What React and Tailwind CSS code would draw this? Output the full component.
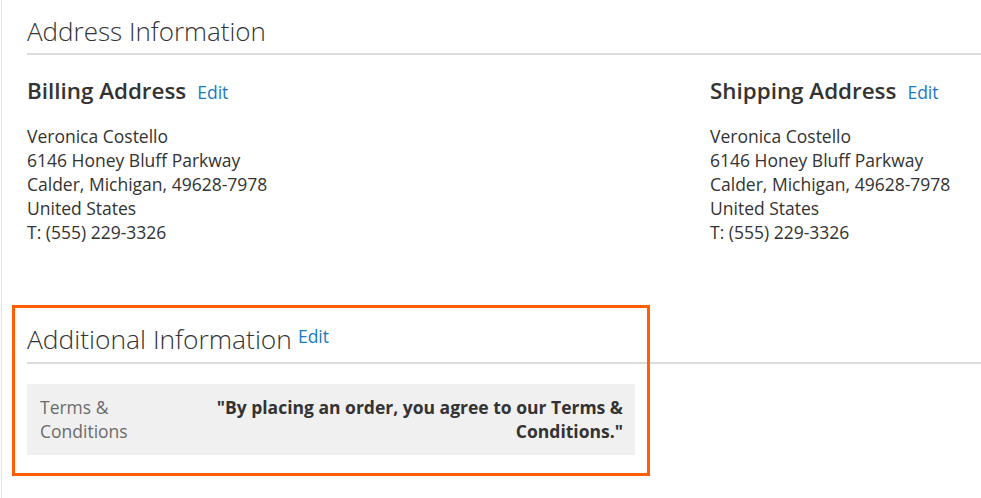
export default function App() {
  const font = { fontFamily: '"Open Sans", "Noto Sans", sans-serif' };
  const Address = () => (
    <div className="text-[17.5px] leading-[24px] text-[#333]">
      <div>Veronica Costello</div>
      <div>6146 Honey Bluff Parkway</div>
      <div>Calder, Michigan, 49628-7978</div>
      <div>United States</div>
      <div>T: (555) 229-3326</div>
    </div>
  );
  return (
    <div className="relative w-[981px] h-[498px] overflow-hidden bg-white" style={font}>
      <div className="ml-px h-full border-l border-[#e3e3e3] pl-[25px]">
        <div className="pt-[16px] pb-[6px] border-b-2 border-[#dcdcdc]">
          <h2 className="text-[26px] leading-[31px] font-light text-[#333]">Address Information</h2>
        </div>
        <div className="grid grid-cols-[683px_1fr] pt-[22px]">
          <div>
            <div className="flex items-baseline h-[28px]">
              <span className="text-[22.4px] leading-[28px] font-semibold text-[#333]">Billing Address</span>
              <a className="ml-[11px] text-[17.5px] text-[#1979c3]">Edit</a>
            </div>
            <div className="pt-[19px]">
              <Address />
            </div>
          </div>
          <div>
            <div className="flex items-baseline h-[28px]">
              <span className="text-[22.4px] leading-[28px] font-semibold text-[#333]">Shipping Address</span>
              <a className="ml-[11px] text-[17.5px] text-[#1979c3]">Edit</a>
            </div>
            <div className="pt-[19px]">
              <Address />
            </div>
          </div>
        </div>
        <div className="mt-[77px] pb-[7px] border-b-2 border-[#dcdcdc]">
          <h2 className="text-[26.4px] leading-[31px] font-light text-[#333]">
            Additional Information
            <a className="ml-[6px] text-[17.5px] font-normal text-[#1979c3] align-text-top">Edit</a>
          </h2>
        </div>
        <div className="mt-[20px] w-[608px] bg-[#f0f0f0] grid grid-cols-[150px_1fr] pt-[11px] pb-[12px] text-[17.5px] leading-[24px]">
          <div className="pl-[13px] pr-[10px] text-[#6b6b6b]">Terms &amp; Conditions</div>
          <div className="pr-[12px] text-right font-bold text-[#333]">
            "By placing an order, you agree to our Terms &amp; Conditions."
          </div>
        </div>
      </div>
      <div className="absolute left-[12px] top-[305px] w-[638px] h-[171px] border-[3px] border-[#ff5f00] pointer-events-none" />
    </div>
  );
}
